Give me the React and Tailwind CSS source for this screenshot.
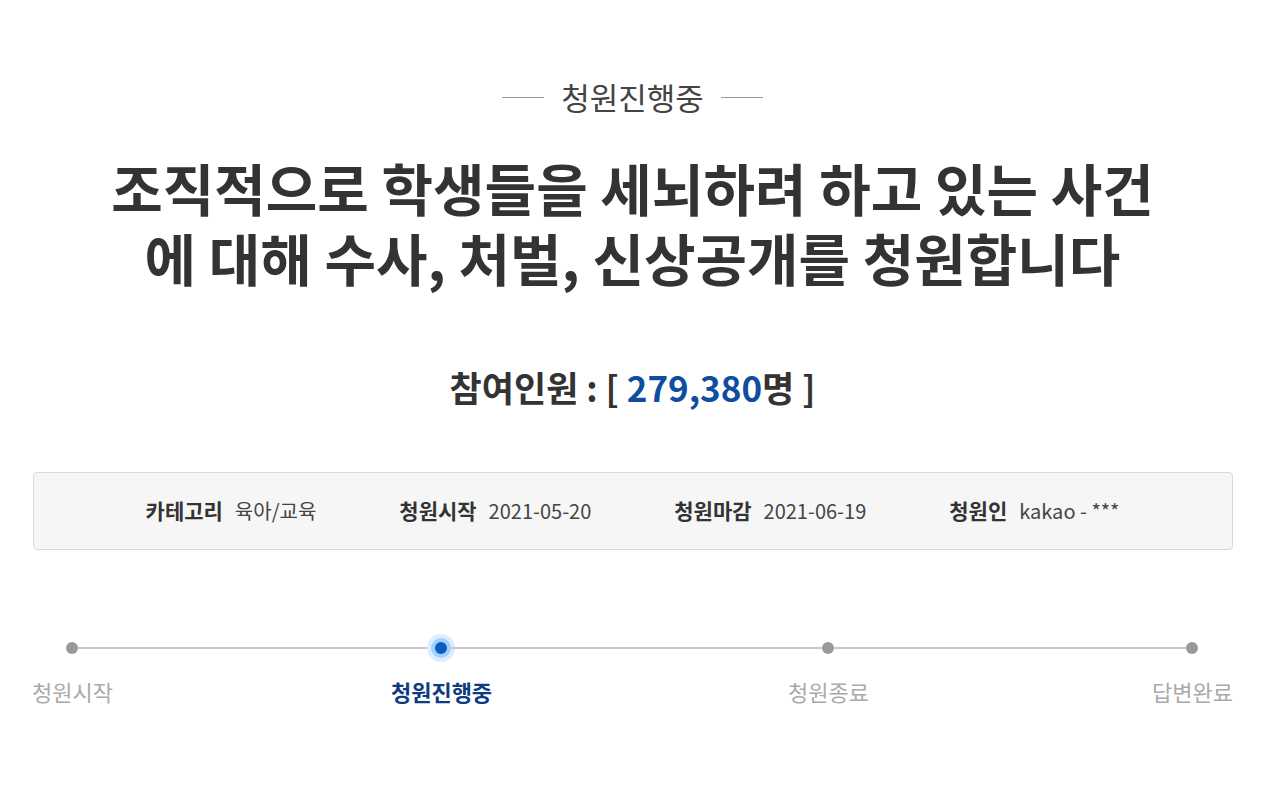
export default function App() {
  const steps = [
    { label: '청원시작', active: false, ml: 'ml-0' },
    { label: '청원진행중', active: true, ml: 'ml-[289px]' },
    { label: '청원종료', active: false, ml: 'ml-[307px]' },
    { label: '답변완료', active: false, ml: 'ml-[284px]' },
  ];

  const info = [
    { k: '카테고리', v: '육아/교육' },
    { k: '청원시작', v: '2021-05-20' },
    { k: '청원마감', v: '2021-06-19' },
    { k: '청원인', v: 'kakao - ***' },
  ];

  return (
    <div
      className="w-[1265px] min-h-[804px] bg-white pt-[77px] text-[#333]"
      style={{ fontFamily: '"Noto Sans CJK KR", "Noto Sans", sans-serif' }}
    >
      <div className="w-[1200px] mx-auto">
        {/* status label */}
        <div className="flex items-center justify-center h-[40px]">
          <span className="w-[42px] h-px bg-[#999]" />
          <span className="mx-[17px] text-[31px] leading-[40px] text-[#444]">청원진행중</span>
          <span className="w-[42px] h-px bg-[#999]" />
        </div>

        {/* title */}
        <h1 className="mt-[35px] text-center text-[56px] leading-[70px] font-bold text-[#333]">
          조직적으로 학생들을 세뇌하려 하고 있는 사건
          <br />
          에 대해 수사, 처벌, 신상공개를 청원합니다
        </h1>

        {/* count */}
        <p className="mt-[70px] text-center text-[35px] leading-[50px] font-bold text-[#333]">
          참여인원 : [ <span className="text-[#0f4da0]">279,380</span>명 ]
        </p>

        {/* info box */}
        <div className="mt-[60px] h-[78px] rounded-[4px] border border-[#d9d9d9] bg-[#f6f6f6] flex items-center justify-center gap-[83px]">
          {info.map((i) => (
            <div key={i.k} className="flex items-center gap-[12px]">
              <span className="text-[21px] font-bold text-[#333]">{i.k}</span>
              <span className="text-[20px] text-[#444]">{i.v}</span>
            </div>
          ))}
        </div>

        {/* progress */}
        <div className="mt-[84px] h-[28px] flex items-center pl-[33px]">
          <span className="w-[12px] h-[12px] rounded-full bg-[#999]" />
          <span className="w-[357px] h-[2px] bg-[#c8c8c8]" />
          <span className="w-[12px] h-[12px] rounded-full bg-[#0b5cc4] shadow-[0_0_0_4px_#9fd0ff,0_0_0_8px_#dcedff]" />
          <span className="w-[375px] h-[2px] bg-[#c8c8c8]" />
          <span className="w-[12px] h-[12px] rounded-full bg-[#999]" />
          <span className="w-[352px] h-[2px] bg-[#c8c8c8]" />
          <span className="w-[12px] h-[12px] rounded-full bg-[#999]" />
        </div>
        <div className="mt-[14px] flex">
          {steps.map((s) => (
            <div key={s.label} className={`w-[80px] flex justify-center whitespace-nowrap ${s.ml}`}>
              <span
                className={
                  s.active
                    ? 'text-[22px] leading-[30px] font-bold text-[#0d3c83]'
                    : 'text-[22px] leading-[30px] text-[#aaa]'
                }
              >
                {s.label}
              </span>
            </div>
          ))}
        </div>
      </div>
    </div>
  );
}
